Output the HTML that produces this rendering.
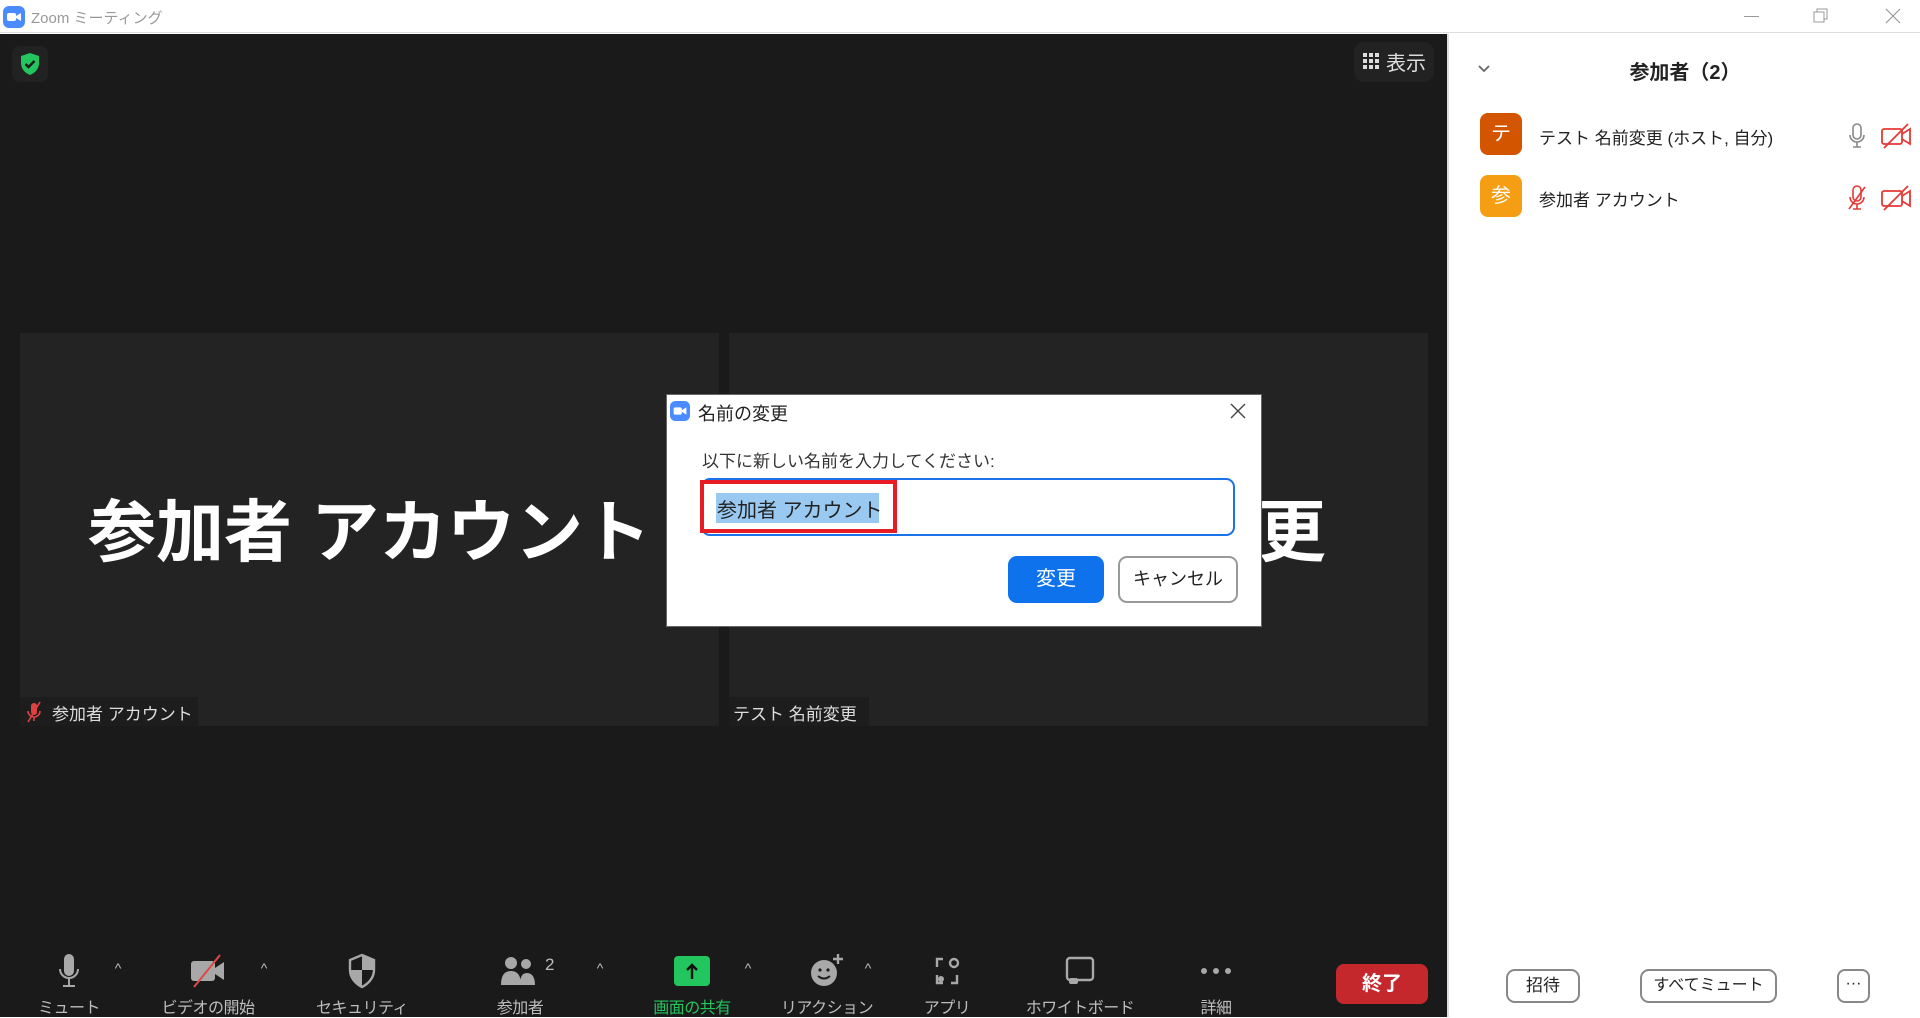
<!DOCTYPE html>
<html><head><meta charset="utf-8">
<style>
*{margin:0;padding:0;box-sizing:border-box}
body{width:1920px;height:1017px;overflow:hidden;background:#fff;font-family:"Liberation Sans","Noto Sans CJK JP",sans-serif;position:relative}
.abs{position:absolute}
.lbl{position:absolute;top:994px;color:#bdbdbd;font-size:16px;transform:translateX(-50%);white-space:nowrap;letter-spacing:-0.5px}
.caret{position:absolute;top:960px;color:#bdbdbd;font-size:14px;transform:translateX(-50%)}
.ico{position:absolute;transform:translate(-50%,-50%);top:971px}
</style></head><body>
<!-- title bar -->
<div class="abs" style="left:0;top:0;width:1920px;height:33px;background:#fff;border-bottom:1px solid #ddd"></div>
<svg class="abs" style="left:3px;top:6px" width="22" height="22" viewBox="0 0 22 22"><rect width="22" height="22" rx="6" fill="#4a8cff"/><rect x="4" y="7" width="9" height="8" rx="2" fill="#fff"/><path d="M13 10l5-3v8l-5-3z" fill="#fff"/></svg>
<div class="abs" style="left:31px;top:7px;font-size:15px;color:#999">Zoom ミーティング</div>
<div class="abs" style="left:1744px;top:16px;width:15px;height:1px;background:#999"></div>
<svg class="abs" style="left:1813px;top:8px" width="16" height="16"><rect x="1" y="4" width="10" height="10" fill="none" stroke="#999"/><path d="M4 4V1h10v10h-3" fill="none" stroke="#999"/></svg>
<svg class="abs" style="left:1885px;top:8px" width="16" height="16"><path d="M1 1L15 15M15 1L1 15" stroke="#999" stroke-width="1.2"/></svg>
<!-- main dark -->
<div class="abs" style="left:0;top:34px;width:1447px;height:983px;background:#1a1a1a"></div>
<div class="abs" style="left:12px;top:46px;width:36px;height:36px;border-radius:8px;background:#222"></div>
<svg class="abs" style="left:19px;top:52px" width="22" height="24" viewBox="0 0 22 24"><path d="M11 1L20 4v7c0 6-4 10-9 12C6 21 2 17 2 11V4z" fill="#22c55e"/><path d="M6.5 12l3 3 6-6" stroke="#1a1a1a" stroke-width="2.4" fill="none"/></svg>
<div class="abs" style="left:1354px;top:42px;width:80px;height:40px;border-radius:10px;background:#222"></div>
<svg class="abs" style="left:1363px;top:53px" width="16" height="16"><g fill="#ddd"><rect x="0" y="0" width="4" height="4"/><rect x="6" y="0" width="4" height="4"/><rect x="12" y="0" width="4" height="4"/><rect x="0" y="6" width="4" height="4"/><rect x="6" y="6" width="4" height="4"/><rect x="12" y="6" width="4" height="4"/><rect x="0" y="12" width="4" height="4"/><rect x="6" y="12" width="4" height="4"/><rect x="12" y="12" width="4" height="4"/></g></svg>
<div class="abs" style="left:1386px;top:47px;font-size:20px;color:#ddd">表示</div>
<!-- tiles -->
<div class="abs" style="left:20px;top:333px;width:699px;height:393px;background:#232323;overflow:hidden">
 <div class="abs" style="left:0;top:144px;width:699px;text-align:center;color:#fff;font-weight:bold;font-size:68px;white-space:nowrap">参加者 アカウント</div>
</div>
<div class="abs" style="left:729px;top:333px;width:699px;height:393px;background:#232323;overflow:hidden">
 <div class="abs" style="left:-100px;top:144px;width:899px;text-align:center;color:#fff;font-weight:bold;font-size:68px;white-space:nowrap">テスト 名前変更</div>
</div>
<div class="abs" style="left:20px;top:697px;width:178px;height:29px;background:#1d1d1d"></div>
<svg class="abs" style="left:26px;top:701px" width="16" height="22" viewBox="0 0 16 22"><rect x="5" y="2" width="6" height="12" rx="3" fill="#e04040"/><path d="M2 10a6 6 0 0 0 12 0M8 16v4" stroke="#e04040" stroke-width="1.6" fill="none"/><path d="M14 1L2 21" stroke="#e04040" stroke-width="1.6"/></svg>
<div class="abs" style="left:52px;top:700px;font-size:17px;color:#ddd">参加者 アカウント</div>
<div class="abs" style="left:729px;top:697px;width:140px;height:29px;background:#1d1d1d"></div>
<div class="abs" style="left:733px;top:700px;font-size:17px;color:#ddd">テスト 名前変更</div>
<!-- dialog -->
<div class="abs" style="left:666px;top:394px;width:596px;height:233px;background:#fff;border:1px solid #666"></div>
<svg class="abs" style="left:670px;top:401px" width="20" height="20" viewBox="0 0 22 22"><rect width="22" height="22" rx="6" fill="#4a8cff"/><rect x="4" y="7" width="9" height="8" rx="2" fill="#fff"/><path d="M13 10l5-3v8l-5-3z" fill="#fff"/></svg>
<div class="abs" style="left:698px;top:400px;font-size:18px;color:#222">名前の変更</div>
<svg class="abs" style="left:1230px;top:403px" width="16" height="16"><path d="M1 1L15 15M15 1L1 15" stroke="#444" stroke-width="1.4"/></svg>
<div class="abs" style="left:702px;top:447px;font-size:17px;color:#333">以下に新しい名前を入力してください:</div>
<div class="abs" style="left:701px;top:478px;width:534px;height:58px;border:2px solid #1a73e8;border-radius:9px"></div>
<div class="abs" style="left:700px;top:480px;width:197px;height:53px;border:4px solid #e81c24"></div>
<div class="abs" style="left:716px;top:493px;width:163px;height:30px;background:#99c9f0"></div>
<div class="abs" style="left:717px;top:494px;font-size:20px;color:#222;white-space:nowrap">参加者 アカウント</div>
<div class="abs" style="left:1008px;top:556px;width:96px;height:47px;border-radius:9px;background:#0e72ed;color:#fff;font-size:20px;text-align:center;line-height:47px">変更</div>
<div class="abs" style="left:1118px;top:556px;width:120px;height:47px;border-radius:9px;border:2px solid #999;color:#222;font-size:18px;text-align:center;line-height:43px">キャンセル</div>
<!-- toolbar icons -->
<svg class="ico" style="left:69px" width="24" height="36" viewBox="0 0 24 36"><rect x="7" y="1" width="10" height="22" rx="5" fill="#a8a8a8"/><path d="M3 16a9 9 0 0 0 18 0M12 25v7M6 33h12" stroke="#a8a8a8" stroke-width="2" fill="none"/></svg>
<div class="caret" style="left:118px">^</div>
<svg class="ico" style="left:208px" width="40" height="36" viewBox="0 0 40 36"><rect x="3" y="8" width="24" height="20" rx="3" fill="#a8a8a8"/><path d="M27 15l9-6v18l-9-6z" fill="#a8a8a8"/><path d="M32 2L6 34" stroke="#e04848" stroke-width="2"/></svg>
<div class="caret" style="left:264px">^</div>
<svg class="ico" style="left:362px" width="30" height="36" viewBox="0 0 30 36"><path d="M15 2L27 7v10c0 8-6 14-12 17C9 31 3 25 3 17V7z" fill="none" stroke="#a8a8a8" stroke-width="2.4"/><path d="M15 2L27 7v10H15zM15 17v17C9 31 3 25 3 17z" fill="#a8a8a8"/></svg>
<svg class="ico" style="left:520px" width="40" height="32" viewBox="0 0 40 32"><circle cx="11" cy="8" r="6" fill="#a8a8a8"/><circle cx="26" cy="9" r="5" fill="#a8a8a8"/><path d="M1 30c0-10 4-14 10-14s10 4 10 14z" fill="#a8a8a8"/><path d="M20 30c0-8 2-12 7-12s8 4 8 12z" fill="#a8a8a8"/></svg>
<div class="abs" style="left:545px;top:955px;color:#bdbdbd;font-size:17px">2</div>
<div class="caret" style="left:600px">^</div>
<div class="ico" style="left:692px;width:36px;height:30px;background:#22c55e;border-radius:4px"></div>
<svg class="ico" style="left:692px" width="14" height="18" viewBox="0 0 14 18"><path d="M7 17V3M2 8l5-5 5 5" stroke="#111" stroke-width="2.4" fill="none"/></svg>
<div class="caret" style="left:748px">^</div>
<svg class="ico" style="left:827px" width="34" height="36" viewBox="0 0 34 36"><circle cx="14" cy="20" r="13" fill="#a8a8a8"/><circle cx="10" cy="17" r="1.6" fill="#1a1a1a"/><circle cx="18" cy="17" r="1.6" fill="#1a1a1a"/><path d="M8 23q6 5 12 0" stroke="#1a1a1a" stroke-width="2" fill="none"/><path d="M28 1v10M23 6h10" stroke="#a8a8a8" stroke-width="2.4"/></svg>
<div class="caret" style="left:868px">^</div>
<svg class="ico" style="left:947px" width="28" height="30" viewBox="0 0 28 30"><path d="M10 3H4v8M4 19v8h6M18 27h6v-8" stroke="#a8a8a8" stroke-width="2.4" fill="none"/><circle cx="21" cy="7" r="4" stroke="#a8a8a8" stroke-width="2.4" fill="none"/><circle cx="8" cy="23" r="3" fill="#a8a8a8"/></svg>
<svg class="ico" style="left:1080px" width="32" height="30" viewBox="0 0 32 30"><rect x="3" y="2" width="26" height="22" rx="3" fill="none" stroke="#a8a8a8" stroke-width="2.4"/><rect x="5" y="22" width="9" height="6" rx="2" fill="#a8a8a8"/></svg>
<svg class="ico" style="left:1216px" width="32" height="8" viewBox="0 0 32 8"><circle cx="4" cy="4" r="3" fill="#a8a8a8"/><circle cx="16" cy="4" r="3" fill="#a8a8a8"/><circle cx="28" cy="4" r="3" fill="#a8a8a8"/></svg>
<div class="lbl" style="left:69px">ミュート</div>
<div class="lbl" style="left:208px">ビデオの開始</div>
<div class="lbl" style="left:362px">セキュリティ</div>
<div class="lbl" style="left:520px">参加者</div>
<div class="lbl" style="left:692px;color:#22c55e">画面の共有</div>
<div class="lbl" style="left:827px">リアクション</div>
<div class="lbl" style="left:947px">アプリ</div>
<div class="lbl" style="left:1080px">ホワイトボード</div>
<div class="lbl" style="left:1216px">詳細</div>
<div class="abs" style="left:1336px;top:964px;width:92px;height:40px;border-radius:8px;background:#c4282c;color:#fff;font-size:20px;font-weight:bold;text-align:center;line-height:40px">終了</div>
<!-- right panel -->
<div class="abs" style="left:1447px;top:34px;width:2px;height:983px;background:#ddd"></div>
<svg class="abs" style="left:1477px;top:64px" width="14" height="10"><path d="M2 2l5 5 5-5" stroke="#666" stroke-width="1.8" fill="none"/></svg>
<div class="abs" style="left:1600px;top:56px;width:170px;text-align:center;font-size:20px;font-weight:bold;color:#222">参加者（2）</div>
<div class="abs" style="left:1480px;top:113px;width:42px;height:42px;border-radius:8px;background:#d45500;color:#fff;font-size:20px;text-align:center;line-height:42px">テ</div>
<div class="abs" style="left:1539px;top:124px;font-size:17px;color:#222">テスト 名前変更 (ホスト, 自分)</div>
<div class="abs" style="left:1480px;top:175px;width:42px;height:42px;border-radius:8px;background:#f59e14;color:#fff;font-size:20px;text-align:center;line-height:42px">参</div>
<div class="abs" style="left:1539px;top:186px;font-size:17px;color:#222">参加者 アカウント</div>
<svg class="abs" style="left:1848px;top:123px" width="18" height="26" viewBox="0 0 18 26"><rect x="5" y="1" width="8" height="15" rx="4" fill="none" stroke="#888" stroke-width="1.6"/><path d="M2 12a7 7 0 0 0 14 0M9 19v5M5 24h8" stroke="#888" stroke-width="1.6" fill="none"/></svg>
<svg class="abs" style="left:1848px;top:185px" width="18" height="26" viewBox="0 0 18 26"><rect x="5" y="1" width="8" height="15" rx="4" fill="none" stroke="#e53935" stroke-width="1.6"/><path d="M2 12a7 7 0 0 0 14 0M9 19v5M5 24h8" stroke="#e53935" stroke-width="1.6" fill="none"/><path d="M17 2L1 24" stroke="#e53935" stroke-width="1.6"/></svg>
<svg class="abs" style="left:1880px;top:123px" width="40" height="26" viewBox="0 0 40 26"><rect x="2" y="6" width="20" height="15" rx="2" fill="none" stroke="#e53935" stroke-width="1.8"/><path d="M22 11l8-5v15l-8-5" fill="none" stroke="#e53935" stroke-width="1.8"/><path d="M28 1L4 25" stroke="#e53935" stroke-width="1.8"/></svg>
<svg class="abs" style="left:1880px;top:185px" width="40" height="26" viewBox="0 0 40 26"><rect x="2" y="6" width="20" height="15" rx="2" fill="none" stroke="#e53935" stroke-width="1.8"/><path d="M22 11l8-5v15l-8-5" fill="none" stroke="#e53935" stroke-width="1.8"/><path d="M28 1L4 25" stroke="#e53935" stroke-width="1.8"/></svg>
<div class="abs" style="left:1506px;top:969px;width:74px;height:34px;border:2px solid #888;border-radius:9px;font-size:17px;color:#222;text-align:center;line-height:30px">招待</div>
<div class="abs" style="left:1640px;top:969px;width:137px;height:34px;border:2px solid #888;border-radius:9px;font-size:16px;color:#222;text-align:center;line-height:30px">すべてミュート</div>
<div class="abs" style="left:1837px;top:969px;width:33px;height:34px;border:2px solid #888;border-radius:8px;font-size:16px;color:#222;text-align:center;line-height:26px">···</div>
</body></html>
